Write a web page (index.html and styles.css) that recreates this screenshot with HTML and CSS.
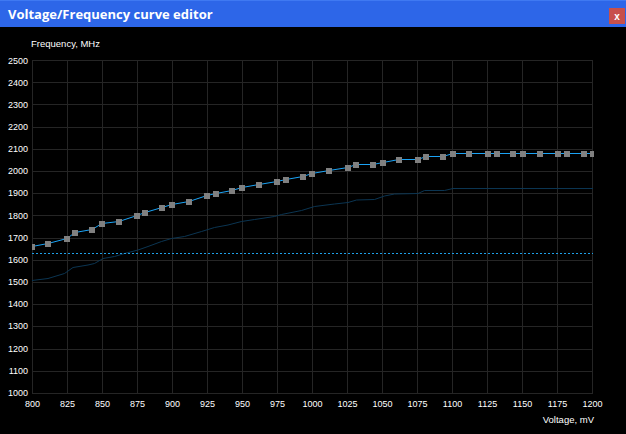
FILE: index.html
```html
<!DOCTYPE html>
<html>
<head>
<meta charset="utf-8">
<title>Voltage/Frequency curve editor</title>
<link rel="stylesheet" href="styles.css">
</head>
<body>
<div class="window">
  <header class="titlebar">
    <span class="title">Voltage/Frequency curve editor</span>
    <button class="close" type="button">x</button>
  </header>
  <main class="chart">
    <div class="y-title">Frequency, MHz</div>
    <div class="plot-row">
      <div class="y-labels">
        <span>2500</span><span>2400</span><span>2300</span><span>2200</span>
        <span>2100</span><span>2000</span><span>1900</span><span>1800</span>
        <span>1700</span><span>1600</span><span>1500</span><span>1400</span>
        <span>1300</span><span>1200</span><span>1100</span><span>1000</span>
      </div>
      <svg class="plot" width="562" height="334" viewBox="0 0 562 334">
        <path class="grid" d="M0.5 0V334 M35.5 0V334 M70.5 0V334 M105.5 0V334 M140.5 0V334 M175.5 0V334 M210.5 0V334 M245.5 0V334 M280.5 0V334 M315.5 0V334 M350.5 0V334 M385.5 0V334 M420.5 0V334 M455.5 0V334 M490.5 0V334 M525.5 0V334 M560.5 0V334
          M0 0.5H561 M0 22.5H561 M0 44.5H561 M0 67.5H561 M0 89.5H561 M0 111.5H561 M0 133.5H561 M0 155.5H561 M0 178.5H561 M0 200.5H561 M0 222.5H561 M0 244.5H561 M0 266.5H561 M0 289.5H561 M0 311.5H561 M0 333.5H561"/>
        <polyline class="curve-dim" points="0,220.5 16,218.5 32.5,213.5 41,207.5 56,205 62.5,203.5 71,198.5 82.5,196.5 92.5,193.5 106,190 116,186.5 129.5,181.5 139.5,178.5 152.5,176.5 169.5,171.5 182.5,167.5 196,165 209.5,161.5 222.5,159.5 242.5,156.5 249.5,154.5 269.5,150.5 282.5,146.5 302.5,144 316,142.5 324.5,140 342.5,139.5 352.5,136 362.5,134 386,133.5 392.5,130.5 412.5,130.5 421,128.5 561,128.5"/>
        <path class="target" d="M0 193.5H561"/>
        <polyline class="curve" points="0,186.5 16,183.5 35,178.5 43,172.5 60,169.5 70,163.5 87,161.5 105,155.5 113,152.5 130,147.5 140,144.5 157,141.5 175,135.5 184,133.5 200,130.5 210,127.5 227,124.5 245,121.5 254,119.5 271,116.5 280,113.5 297,110.5 316,107.5 324,104.5 341,104.5 351,102.5 367,99.5 386,99.5 394,96.5 411,96.5 421,93.5 561,93.5"/>
        <g class="points">
          <rect x="-3" y="184" width="6" height="6"/>
          <rect x="13" y="181" width="6" height="6"/>
          <rect x="32" y="176" width="6" height="6"/>
          <rect x="40" y="170" width="6" height="6"/>
          <rect x="57" y="167" width="6" height="6"/>
          <rect x="67" y="161" width="6" height="6"/>
          <rect x="84" y="159" width="6" height="6"/>
          <rect x="102" y="153" width="6" height="6"/>
          <rect x="110" y="150" width="6" height="6"/>
          <rect x="127" y="145" width="6" height="6"/>
          <rect x="137" y="142" width="6" height="6"/>
          <rect x="154" y="139" width="6" height="6"/>
          <rect x="172" y="133" width="6" height="6"/>
          <rect x="181" y="131" width="6" height="6"/>
          <rect x="197" y="128" width="6" height="6"/>
          <rect x="207" y="125" width="6" height="6"/>
          <rect x="224" y="122" width="6" height="6"/>
          <rect x="242" y="119" width="6" height="6"/>
          <rect x="251" y="117" width="6" height="6"/>
          <rect x="268" y="114" width="6" height="6"/>
          <rect x="277" y="111" width="6" height="6"/>
          <rect x="294" y="108" width="6" height="6"/>
          <rect x="313" y="105" width="6" height="6"/>
          <rect x="321" y="102" width="6" height="6"/>
          <rect x="338" y="102" width="6" height="6"/>
          <rect x="348" y="100" width="6" height="6"/>
          <rect x="364" y="97" width="6" height="6"/>
          <rect x="383" y="97" width="6" height="6"/>
          <rect x="391" y="94" width="6" height="6"/>
          <rect x="408" y="94" width="6" height="6"/>
          <rect x="418" y="91" width="6" height="6"/>
          <rect x="434" y="91" width="6" height="6"/>
          <rect x="453" y="91" width="6" height="6"/>
          <rect x="462" y="91" width="6" height="6"/>
          <rect x="478" y="91" width="6" height="6"/>
          <rect x="488" y="91" width="6" height="6"/>
          <rect x="505" y="91" width="6" height="6"/>
          <rect x="523" y="91" width="6" height="6"/>
          <rect x="532" y="91" width="6" height="6"/>
          <rect x="549" y="91" width="6" height="6"/>
          <rect x="558" y="91" width="6" height="6"/>
        </g>
      </svg>
    </div>
    <div class="x-labels">
      <span>800</span><span>825</span><span>850</span><span>875</span><span>900</span>
      <span>925</span><span>950</span><span>975</span><span>1000</span><span>1025</span>
      <span>1050</span><span>1075</span><span>1100</span><span>1125</span><span>1150</span>
      <span>1175</span><span>1200</span>
    </div>
    <div class="x-title">Voltage, mV</div>
  </main>
</div>
</body>
</html>
```
FILE: styles.css
```css
* { box-sizing: border-box; }
html, body { margin: 0; padding: 0; background: #000; }
body {
  width: 626px;
  height: 434px;
  overflow: hidden;
  font-family: "Liberation Sans", Arial, sans-serif;
  color: #fff;
}
.window {
  width: 626px;
  height: 434px;
  background: #000;
  display: flex;
  flex-direction: column;
}
.titlebar {
  height: 27px;
  flex: none;
  display: flex;
  align-items: flex-start;
  background: #2d66e8;
  border-top: 1px solid #3f79f2;
  padding-left: 8px;
}
.title {
  font-family: "Open Sans", sans-serif;
  font-weight: 700;
  font-size: 13px;
  line-height: 26px;
  color: #fff;
  white-space: nowrap;
}
.close {
  margin-left: auto;
  margin-top: 7px;
  margin-right: 1px;
  width: 16px;
  height: 16px;
  padding: 0;
  border: none;
  background: #c8504b;
  color: #fff;
  font-family: "Liberation Sans", Arial, sans-serif;
  font-weight: 700;
  font-size: 10px;
  line-height: 15px;
  display: flex;
  align-items: center;
  justify-content: center;
}
.chart {
  flex: 1;
  padding-top: 11px;
}
.y-title {
  margin-left: 31px;
  font-size: 9.5px;
  line-height: 12px;
}
.plot-row {
  display: flex;
  align-items: flex-start;
  height: 348px;
}
.y-labels {
  width: 32px;
  height: 344.5px;
  margin-top: 4.5px;
  padding-right: 4px;
  display: flex;
  flex-direction: column;
  justify-content: space-between;
  align-items: flex-end;
  font-size: 9px;
  line-height: 12px;
  flex: none;
}
.plot {
  display: block;
  flex: none;
  margin-top: 10px;
  overflow: hidden;
}
.grid { fill: none; stroke: #252525; stroke-width: 1; }
.curve-dim { fill: none; stroke: #0b3552; stroke-width: 1; }
.target { fill: none; stroke: #1e9fe8; stroke-width: 1; stroke-dasharray: 2 2; }
.curve { fill: none; stroke: #1ba3f5; stroke-width: 1; }
.points rect { fill: #808080; }
.x-labels {
  display: flex;
  margin-left: 15px;
  font-size: 9px;
  line-height: 12px;
}
.x-labels span {
  flex: none;
  width: 35px;
  text-align: center;
}
.x-title {
  margin-top: 4px;
  padding-right: 32px;
  text-align: right;
  font-size: 9.5px;
  line-height: 12px;
}
```
